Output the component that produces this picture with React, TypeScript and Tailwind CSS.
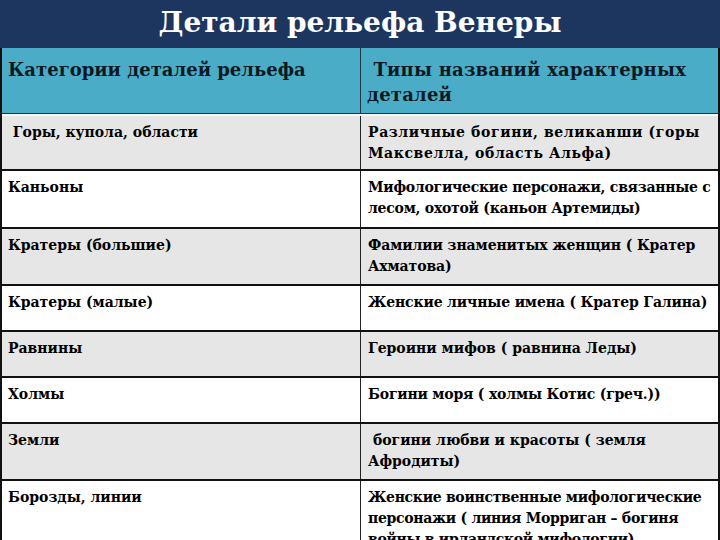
const rows: { left: string; right: React.ReactNode; h: string; gray: boolean; track: string }[] = [
  {
    left: "\u00a0Горы, купола, области",
    right: (
      <>
        Различные богини, великанши (горы
        <br />
        Максвелла, область Альфа)
      </>
    ),
    h: "h-[57px]",
    gray: true,
    track: "tracking-[0.6px]",
  },
  {
    left: "Каньоны",
    right: (
      <>
        Мифологические персонажи, связанные с
        <br />
        лесом, охотой (каньон Артемиды)
      </>
    ),
    h: "h-[58px]",
    gray: false,
    track: "tracking-[-0.25px]",
  },
  {
    left: "Кратеры (большие)",
    right: (
      <>
        Фамилии знаменитых женщин ( Кратер
        <br />
        Ахматова)
      </>
    ),
    h: "h-[57px]",
    gray: true,
    track: "tracking-[-0.1px]",
  },
  {
    left: "Кратеры (малые)",
    right: "Женские личные имена ( Кратер Галина)",
    h: "h-[46px]",
    gray: false,
    track: "tracking-[-0.15px]",
  },
  { left: "Равнины", right: "Героини мифов ( равнина Леды)", h: "h-[46px]", gray: true, track: "" },
  {
    left: "Холмы",
    right: "Богини моря ( холмы Котис (греч.))",
    h: "h-[46px]",
    gray: false,
    track: "tracking-[-0.2px]",
  },
  {
    left: "Земли",
    right: (
      <>
        {"\u00a0"}богини любви и красоты ( земля
        <br />
        Афродиты)
      </>
    ),
    h: "h-[57px]",
    gray: true,
    track: "",
  },
  {
    left: "Борозды, линии",
    right: (
      <>
        Женские воинственные мифологические
        <br />
        персонажи ( линия Морриган – богиня
        <br />
        войны в ирландской мифологии)
      </>
    ),
    h: "h-[80px]",
    gray: false,
    track: "tracking-[-0.3px]",
  },
];

export default function App() {
  return (
    <div className="w-[720px] h-[540px] overflow-hidden bg-white font-['DejaVu_Serif',serif] text-black">
      <div className="h-[48px] bg-[#1c3660] flex justify-center">
        <h1 className="text-[28px] leading-[40px] pt-[3px] font-bold text-white">Детали рельефа Венеры</h1>
      </div>
      <div className="border-l-2 border-r-2 border-[#111]">
        <div className="grid grid-cols-[359px_1fr] h-[66px] bg-[#4aacc6] border-b border-[#1a3a48]">
          <div className="pl-[6px] pt-[9px] text-[18px] leading-[25px] font-bold text-[#0b1a22] border-r border-[#1a3a48]">
            Категории деталей рельефа
          </div>
          <div className="pl-[6px] pt-[9px] text-[18px] leading-[25px] font-bold text-[#0b1a22] tracking-[0.2px]">
            {"\u00a0"}Типы названий характерных
            <br />
            деталей
          </div>
        </div>
        {rows.map((r, i) => (
          <div
            key={i}
            className={`grid grid-cols-[359px_1fr] ${r.h} border-b-2 border-[#111] ${r.gray ? "bg-[#e6e6e6]" : "bg-white"} ${i === 0 ? "border-t-2 border-t-[#f4f8fa]" : ""}`}
          >
            <div className="pl-[6px] pt-[6px] text-[14px] leading-[20px] font-bold border-r border-[#222]">{r.left}</div>
            <div className={`pl-[7px] pt-[6px] text-[14px] leading-[21px] font-bold whitespace-nowrap ${r.track}`}>
              {r.right}
            </div>
          </div>
        ))}
      </div>
    </div>
  );
}
